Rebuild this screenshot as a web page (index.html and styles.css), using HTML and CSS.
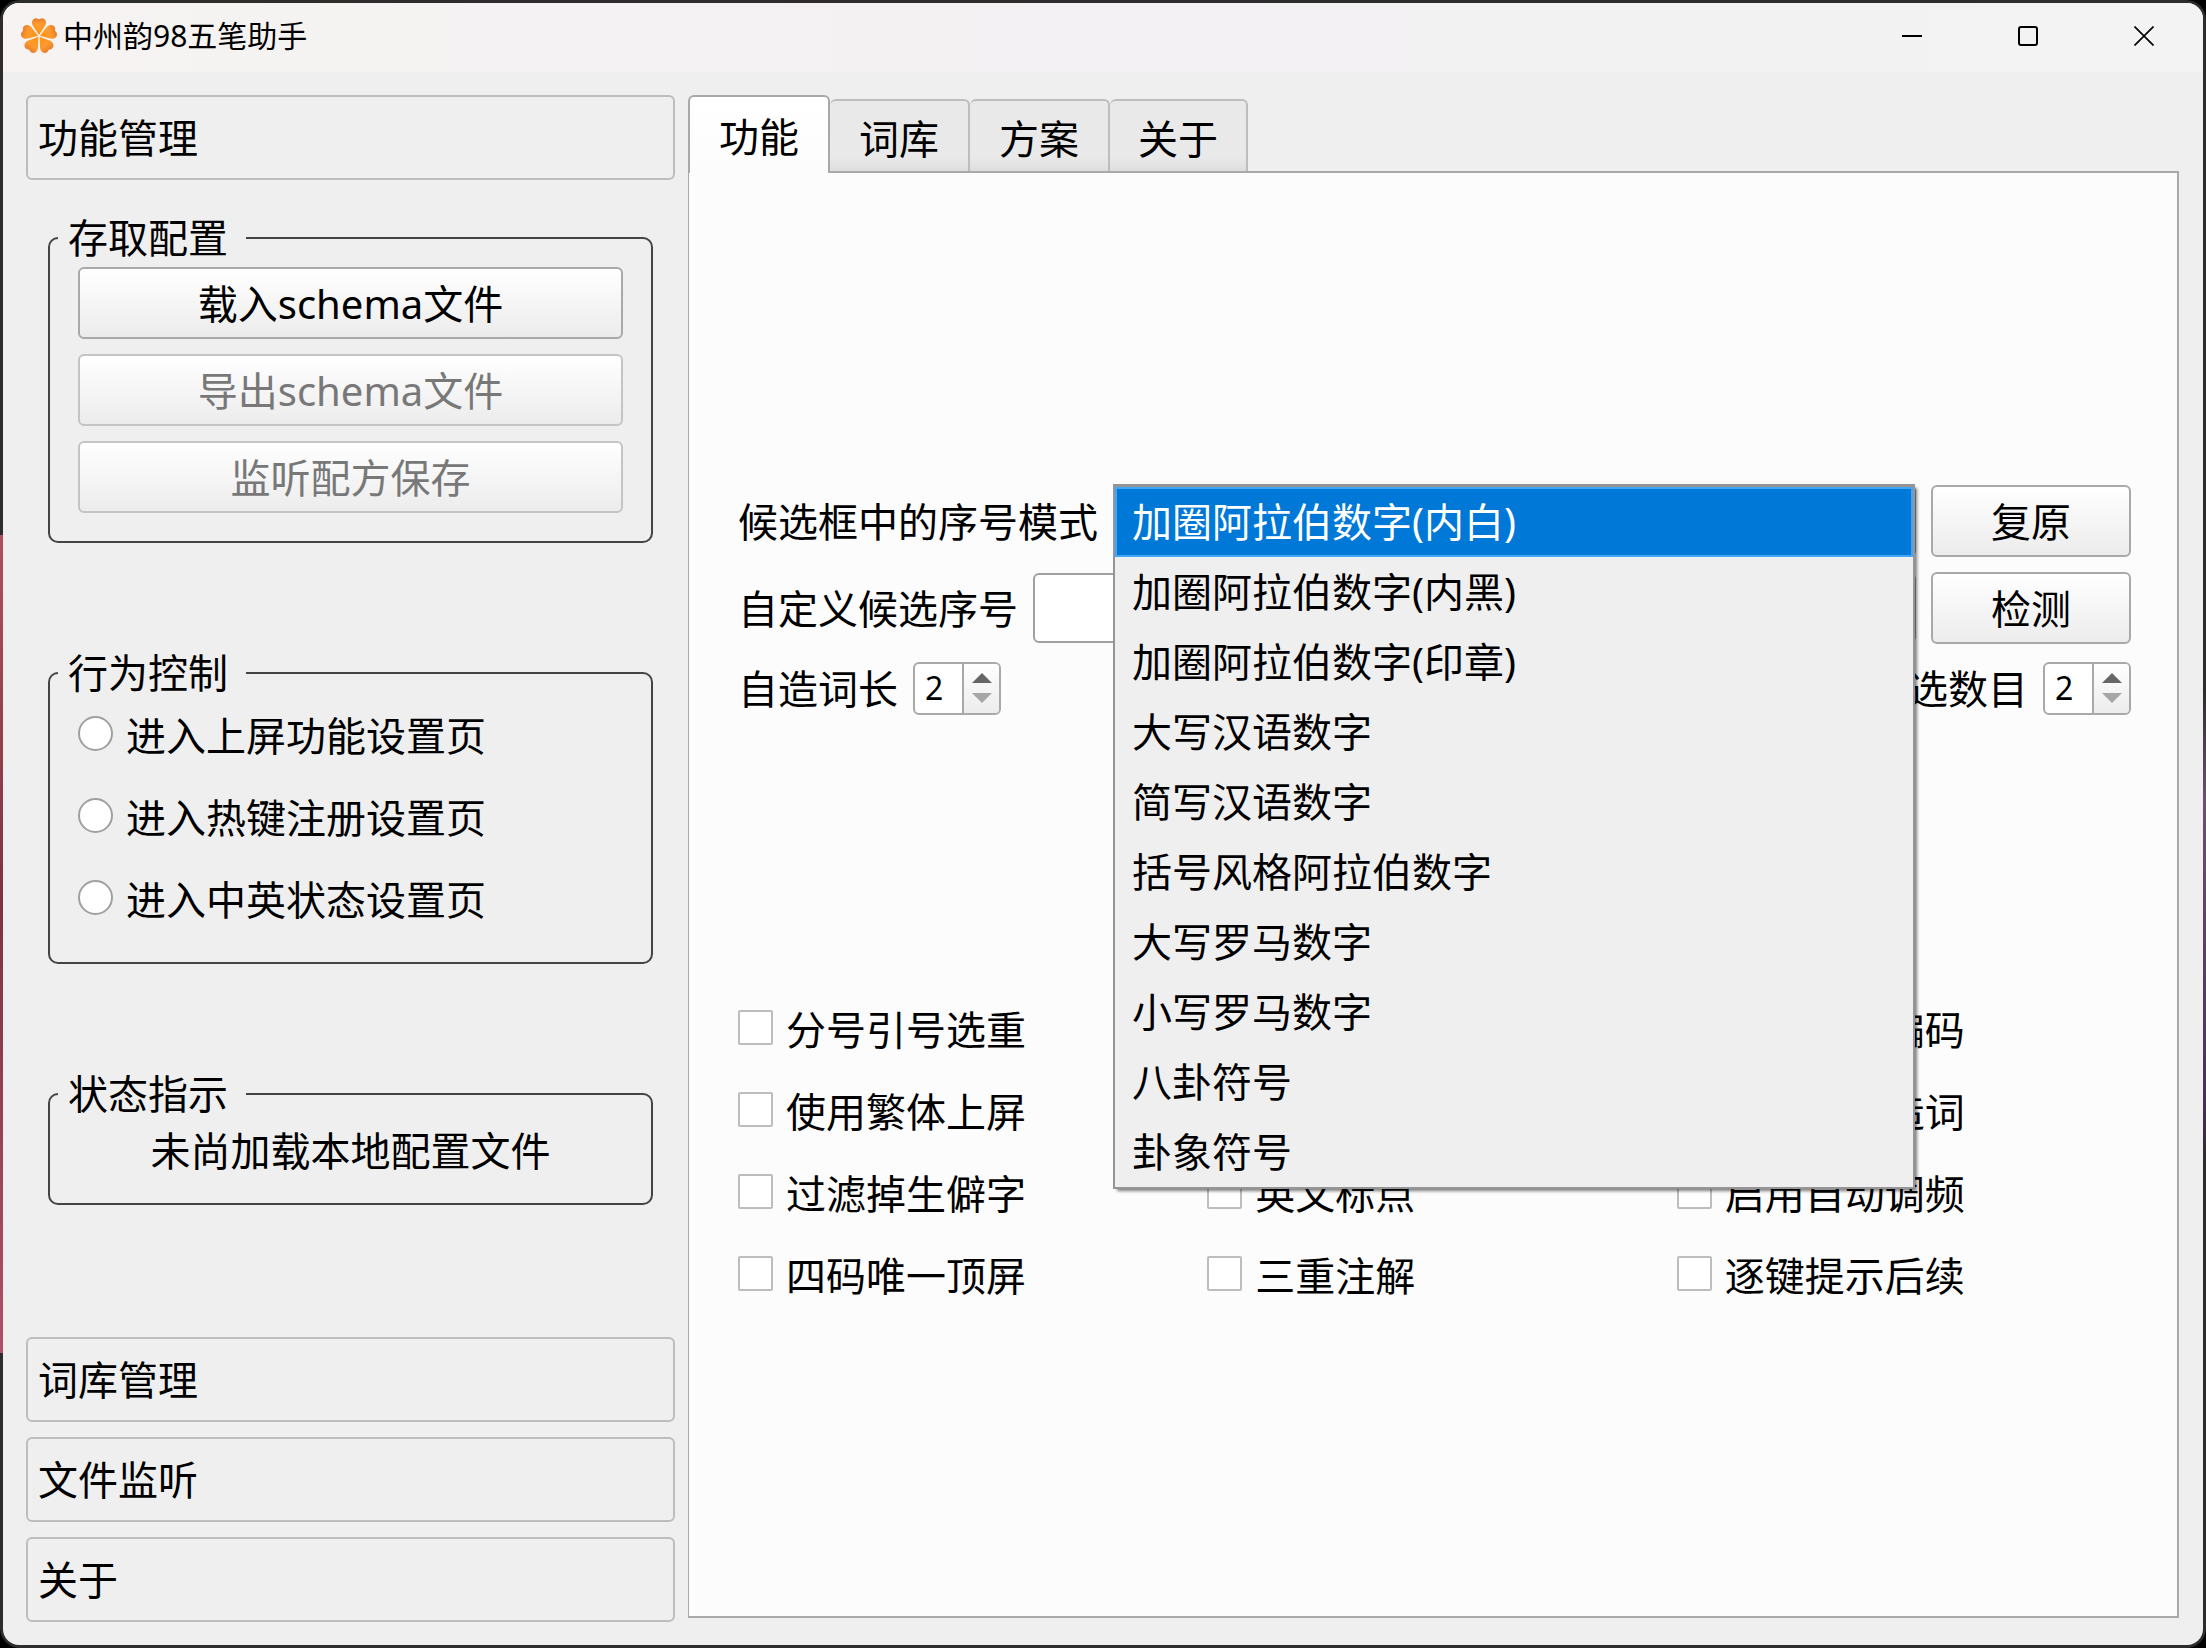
FILE: index.html
```html
<!DOCTYPE html>
<html lang="zh-CN">
<head>
<meta charset="utf-8">
<meta name="viewport" content="width=device-width, initial-scale=1">
<title>中州韵98五笔助手</title>
<link rel="stylesheet" href="styles.css">
</head>
<body>
<div class="desktop">
<div class="window">
  <header class="titlebar">
    <svg class="logo" viewBox="-20 -20 40 40" aria-hidden="true">
      <defs>
        <linearGradient id="petal-fill" gradientUnits="userSpaceOnUse" x1="0" y1="0" x2="0" y2="-18">
          <stop offset="0" stop-color="#ff9410"/>
          <stop offset="0.650" stop-color="#fd9a2e"/>
          <stop offset="1" stop-color="#e67c2c"/>
        </linearGradient>
        <path id="petal" d="M0-1L-6.300-10.500C-8.300-14-6-18-3-17.800C-1.500-17.800-1-17 0-17C1-17 1.500-17.800 3-17.800C6-18 8.300-14 6.300-10.500Z"/>
      </defs>
      <g fill="url(#petal-fill)">
        <use href="#petal"/>
        <use href="#petal" transform="rotate(72)"/>
        <use href="#petal" transform="rotate(144)"/>
        <use href="#petal" transform="rotate(216)"/>
        <use href="#petal" transform="rotate(288)"/>
      </g>
    </svg>
    <h1 class="title">中州韵98五笔助手</h1>
    <div class="window-buttons">
      <button class="window-button" type="button" aria-label="最小化"><svg viewBox="0 0 20 20"><path d="M0 10H20" stroke-width="2"/></svg></button>
      <button class="window-button" type="button" aria-label="最大化"><svg viewBox="0 0 20 20"><rect x="1" y="1" width="18" height="18" rx="2" stroke-width="2"/></svg></button>
      <button class="window-button" type="button" aria-label="关闭"><svg viewBox="0 0 20 20"><path d="M0.500 0.500L19.500 19.500M19.500 0.500L0.500 19.500" stroke-width="1.700"/></svg></button>
    </div>
  </header>

  <div class="body">
    <aside class="toolbox">
      <button class="section-button" type="button">功能管理</button>
      <div class="section-page">
        <fieldset class="group">
          <legend>存取配置</legend>
          <div class="group-body actions">
            <button class="push-button" type="button">载入schema文件</button>
            <button class="push-button" type="button" disabled>导出schema文件</button>
            <button class="push-button" type="button" disabled>监听配方保存</button>
          </div>
        </fieldset>
        <fieldset class="group">
          <legend>行为控制</legend>
          <div class="group-body choices">
            <label class="choice"><input type="radio" name="page">进入上屏功能设置页</label>
            <label class="choice"><input type="radio" name="page">进入热键注册设置页</label>
            <label class="choice"><input type="radio" name="page">进入中英状态设置页</label>
          </div>
        </fieldset>
        <fieldset class="group">
          <legend>状态指示</legend>
          <div class="group-body status">未尚加载本地配置文件</div>
        </fieldset>
      </div>
      <div class="sections">
        <button class="section-button" type="button">词库管理</button>
        <button class="section-button" type="button">文件监听</button>
        <button class="section-button" type="button">关于</button>
      </div>
    </aside>

    <main class="tabs">
      <div class="tab-bar" role="tablist">
        <button class="tab active" type="button" role="tab" aria-selected="true">功能</button>
        <button class="tab" type="button" role="tab">词库</button>
        <button class="tab" type="button" role="tab">方案</button>
        <button class="tab" type="button" role="tab">关于</button>
      </div>
      <div class="tab-page" role="tabpanel">
        <div class="form">
          <div class="form-row">
            <label for="mode">候选框中的序号模式</label>
            <div class="combo">
              <select id="mode"></select>
              <ul class="popup" role="listbox" aria-label="候选框中的序号模式">
                <li class="selected" role="option" aria-selected="true">加圈阿拉伯数字(内白)</li>
                <li role="option">加圈阿拉伯数字(内黑)</li>
                <li role="option">加圈阿拉伯数字(印章)</li>
                <li role="option">大写汉语数字</li>
                <li role="option">简写汉语数字</li>
                <li role="option">括号风格阿拉伯数字</li>
                <li role="option">大写罗马数字</li>
                <li role="option">小写罗马数字</li>
                <li role="option">八卦符号</li>
                <li role="option">卦象符号</li>
              </ul>
            </div>
            <button class="push-button fixed" type="button">复原</button>
          </div>
          <div class="form-row">
            <label for="custom">自定义候选序号</label>
            <input class="line-edit" id="custom" type="text">
            <button class="push-button fixed" type="button">检测</button>
          </div>
          <div class="form-row spins">
            <div class="field">
              <label for="length">自造词长</label>
              <div class="spin">
                <input id="length" type="number" value="2" min="2">
                <div class="steps">
                  <button type="button" aria-label="增加"><svg viewBox="0 0 20 10"><path d="M0 10L10 0L20 10Z"/></svg></button>
                  <button type="button" aria-label="减少" disabled><svg viewBox="0 0 20 10"><path d="M0 0L10 10L20 0Z"/></svg></button>
                </div>
              </div>
            </div>
            <div class="field">
              <label for="count">候选数目</label>
              <div class="spin">
                <input id="count" type="number" value="2" min="2">
                <div class="steps">
                  <button type="button" aria-label="增加"><svg viewBox="0 0 20 10"><path d="M0 10L10 0L20 10Z"/></svg></button>
                  <button type="button" aria-label="减少" disabled><svg viewBox="0 0 20 10"><path d="M0 0L10 10L20 0Z"/></svg></button>
                </div>
              </div>
            </div>
          </div>
        </div>

        <div class="options">
          <div class="option-column">
            <label class="choice"><input type="checkbox">分号引号选重</label>
            <label class="choice"><input type="checkbox">使用繁体上屏</label>
            <label class="choice"><input type="checkbox">过滤掉生僻字</label>
            <label class="choice"><input type="checkbox">四码唯一顶屏</label>
          </div>
          <div class="option-column">
            <label class="choice"><input type="checkbox">英文标点</label>
            <label class="choice"><input type="checkbox">三重注解</label>
          </div>
          <div class="option-column">
            <label class="choice"><input type="checkbox">启用反查编码</label>
            <label class="choice"><input type="checkbox">启用自动造词</label>
            <label class="choice"><input type="checkbox">启用自动调频</label>
            <label class="choice"><input type="checkbox">逐键提示后续</label>
          </div>
        </div>
      </div>
    </main>
  </div>
</div>
</div>
</body>
</html>
```
FILE: styles.css
```css
* {
  box-sizing: border-box;
}

body {
  margin: 0;
  background: #000;
  color: #000;
  font: 40px/53px "Noto Sans", "Noto Sans CJK SC", sans-serif;
}

button,
input,
select {
  font: inherit;
  color: inherit;
  margin: 0;
}

/* Desktop colours that show round the window edge */
.desktop {
  display: flex;
  min-height: 100vh;
  padding: 3px;
  border-radius: 20px;
  background:
    linear-gradient(#2d2d2d 0 535px, #b0505c 535px, #7c3440 900px, #b0506a 1353px, #2d2d2d 1353px) left / 50% 100% no-repeat,
    linear-gradient(#2d2d2d 0 690px, #6c5070 800px, #4a3058 1100px, #2d2d2d 1165px) right / 50% 100% no-repeat;
}

.window {
  flex: 1;
  display: flex;
  flex-direction: column;
  border-radius: 16px;
  overflow: hidden;
  background: #efefef;
}

.titlebar {
  display: flex;
  align-items: center;
  height: 69px;
  padding: 0 0 4px 16px;
  background: linear-gradient(90deg, #f6f3f2, #f3f1f3 50%, #f3f3f3);
}

.logo {
  width: 40px;
  height: 40px;
}

.title {
  flex: 1;
  margin: 0 0 0 4px;
  font-size: 30px;
  line-height: 40px;
  font-weight: 400;
}

.window-buttons {
  display: flex;
  align-self: stretch;
  padding-right: 1px;
}

.window-button {
  width: 116px;
  padding: 0;
  border: 0;
  background: none;
}

.window-button svg {
  display: block;
  width: 20px;
  height: 20px;
  margin: auto;
  fill: none;
  stroke: #000;
}

.body {
  flex: 1;
  display: grid;
  grid-template-columns: 649fr 1491fr;
  gap: 13px;
  padding: 23px 24px 23px 23px;
}

/* Left column */
.toolbox {
  display: flex;
  flex-direction: column;
}

.section-button {
  display: block;
  width: 100%;
  height: 85px;
  padding: 0 10px;
  border: 2px solid #bdbdbd;
  border-radius: 6px;
  background: none;
  text-align: left;
}

.section-page {
  flex: 1;
  display: flex;
  flex-direction: column;
  gap: 102px;
  padding: 30px 22px 20px;
}

.sections {
  display: flex;
  flex-direction: column;
  gap: 15px;
}

.group {
  min-width: 0;
  margin: 0;
  padding: 0 8px;
  border: 2px solid #444;
  border-radius: 10px;
}

.group legend {
  padding: 0 18px 0 10px;
  line-height: 56px;
}

.group-body {
  padding: 0 20px;
}

.actions {
  display: flex;
  flex-direction: column;
  gap: 15px;
  padding-top: 1px;
  padding-bottom: 28px;
}

.choices {
  display: flex;
  flex-direction: column;
  gap: 29px;
  padding-top: 8px;
  padding-bottom: 36px;
}

.status {
  padding-top: 2px;
  padding-bottom: 26px;
  text-align: center;
}

.push-button {
  height: 72px;
  padding: 0 20px;
  border: 2px solid #a9a9a9;
  border-radius: 6px;
  background: linear-gradient(#fff, #ececec);
}

.push-button:disabled {
  border-color: #c4c4c4;
  color: #787878;
}

.fixed {
  width: 200px;
}

/* Radio buttons and tick boxes */
.choice {
  display: flex;
  align-items: center;
  gap: 13px;
}

.choice input {
  appearance: none;
  flex: none;
  width: 35px;
  height: 35px;
  margin-bottom: 4px;
  border: 2px solid #a0a0a0;
  background: #fff;
}

.choice input[type="radio"] {
  border-radius: 50%;
}

.choice input[type="checkbox"] {
  border-color: #bdbdbd;
  border-radius: 2px;
}

.choice input:checked {
  background: #0078d7;
}

/* Tabs */
.tabs {
  display: flex;
  flex-direction: column;
  padding-bottom: 4px;
}

.tab-bar {
  position: relative;
  display: flex;
  align-items: flex-end;
  height: 78px;
  margin-bottom: -2px;
}

.tab {
  width: 140px;
  height: 72px;
  margin-bottom: 2px;
  padding: 6px 0 0;
  border: 2px solid #bdbdbd;
  border-left-width: 0;
  border-bottom: 0;
  border-radius: 6px 6px 0 0;
  background: linear-gradient(#e9e9e9 80%, #dedede);
  line-height: 60px;
}

.tab.active {
  width: 142px;
  height: 78px;
  margin-bottom: 0;
  padding-top: 4px;
  border-color: #a9a9a9;
  border-left-width: 2px;
  background: linear-gradient(#fff, #fcfcfc);
}

.tab:last-child {
  width: 138px;
}

.tab-page {
  flex: 1;
  padding: 312px 46px 100px 49px;
  border: 2px solid #a9a9a9;
  border-left-width: 1px;
  background: #fcfcfc;
}

.form {
  display: flex;
  flex-direction: column;
  gap: 15px;
}

.form-row {
  display: flex;
  align-items: center;
  gap: 15px;
}

.spins {
  justify-content: space-between;
  height: 58px;
}

.field {
  display: flex;
  align-items: center;
  gap: 15px;
}

.combo {
  position: relative;
  flex: 1;
}

.combo select {
  display: block;
  width: 100%;
  height: 72px;
  padding: 0 10px;
  border: 2px solid #a9a9a9;
  border-radius: 6px;
  background: #f6f6f6;
}

.popup {
  position: absolute;
  z-index: 1;
  top: -1px;
  left: 0;
  right: 1px;
  margin: 0;
  padding: 0;
  border: 2px solid #959595;
  border-top-width: 3px;
  background: #efefef;
  box-shadow: 3px 3px 3px -1px rgba(0, 0, 0, 0.5);
  list-style: none;
}

.popup li {
  padding: 0 15px;
  border: 2px solid transparent;
  line-height: 66px;
}

.popup .selected {
  border-color: #42a5f5;
  background: #0078d7;
  color: #fff;
}

.line-edit {
  flex: 1;
  min-width: 0;
  height: 70px;
  padding: 0 10px;
  border: 2px solid #a0a0a0;
  border-radius: 6px;
  background: #fff;
}

.spin {
  display: flex;
  width: 88px;
  height: 53px;
  border: 2px solid #a9a9a9;
  border-radius: 6px;
  overflow: hidden;
  background: #fff;
}

.spin input {
  appearance: textfield;
  flex: 1;
  min-width: 0;
  padding: 0 0 0 10px;
  border: 0;
  background: none;
  font-size: 32px;
  line-height: 48px;
}

.spin input::-webkit-inner-spin-button {
  appearance: none;
  margin: 0;
}

.steps {
  display: flex;
  flex-direction: column;
  justify-content: center;
  gap: 10px;
  width: 37px;
  border-left: 2px solid #a9a9a9;
  background: linear-gradient(#fff, #ececec);
}

.steps button {
  height: 10px;
  padding: 0;
  border: 0;
  background: none;
}

.steps svg {
  display: block;
  width: 20px;
  height: 10px;
  margin: auto;
  fill: #666;
}

.steps button:disabled svg {
  fill: #a6a6a6;
}

.options {
  display: grid;
  grid-template-columns: repeat(3, 1fr);
  gap: 15px;
  margin-top: 286px;
}

.option-column {
  display: flex;
  flex-direction: column;
  justify-content: flex-end;
  gap: 29px;
}
```
